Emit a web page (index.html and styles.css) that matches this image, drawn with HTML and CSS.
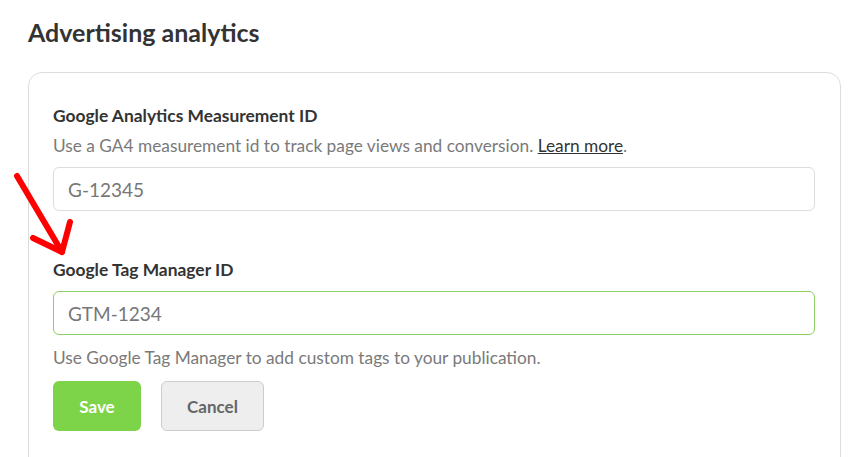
FILE: index.html
```html
<!DOCTYPE html>
<html lang="en">
<head>
    <meta charset="UTF-8">
    <meta name="viewport" content="width=device-width, initial-scale=1.0">
    <title>Advertising analytics</title>
    <link rel="stylesheet" href="styles.css">
</head>
<body>
    <div class="page">
        <h1>Advertising analytics</h1>
        <div class="card">
            <div class="field">
                <label for="ga-id">Google Analytics Measurement ID</label>
                <p class="help">Use a GA4 measurement id to track page views and conversion. <a href="#">Learn more</a>.</p>
                <input id="ga-id" type="text" placeholder="G-12345">
            </div>
            <div class="field">
                <label for="gtm-id">Google Tag Manager ID</label>
                <input id="gtm-id" class="active" type="text" placeholder="GTM-1234">
                <p class="help after">Use Google Tag Manager to add custom tags to your publication.</p>
            </div>
            <div class="actions">
                <button class="btn save">Save</button>
                <button class="btn cancel">Cancel</button>
            </div>
        </div>

        <svg class="arrow" width="80" height="100" viewBox="0 0 80 100">
            <path d="M5 4 L50 80" />
            <path d="M21 66 L50 80 L58 50" />
        </svg>
    </div>
</body>
</html>
```

FILE: styles.css
```css
* {
    margin: 0;
    padding: 0;
    box-sizing: border-box;
}

body {
    background: #fff;
    font-family: Lato, "Open Sans", Arial, sans-serif;
    color: #333;
}

.page {
    position: relative;
    padding: 12px 19px 0 28px;
}

h1 {
    font-size: 25px;
    font-weight: 700;
    color: #333;
    line-height: 40px;
    margin-bottom: 20px;
}

.card {
    border: 1px solid #ddd;
    border-radius: 14px;
    padding: 31px 25px 40px 24px;
}

.field {
    display: flex;
    flex-direction: column;
}

.field + .field {
    margin-top: 47px;
}

label {
    font-size: 17.4px;
    font-weight: 700;
    color: #333;
    line-height: 24px;
}

.help {
    font-size: 17.3px;
    color: #7a7a7a;
    line-height: 24px;
    margin: 6px 0 9px;
}

.help.after {
    margin: 11px 0 0;
}

.help a {
    color: #333;
}

input {
    height: 44px;
    border: 1px solid #ddd;
    border-radius: 6px;
    padding: 0 14px;
    font-family: inherit;
    font-size: 19px;
    color: #777;
    outline: none;
}

input::placeholder {
    color: #777;
}

input.active {
    margin-top: 9px;
    border-color: #8ccf62;
}

.actions {
    display: flex;
    gap: 20px;
    margin-top: 11px;
}

.btn {
    height: 50px;
    border-radius: 6px;
    font-family: inherit;
    font-size: 17px;
    cursor: pointer;
}

.save {
    width: 88px;
    background: #7ed448;
    border: none;
    color: #fff;
    font-weight: 700;
}

.cancel {
    width: 103px;
    background: #eee;
    border: 1px solid #ccc;
    color: #666;
    font-weight: 700;
}

.arrow {
    position: absolute;
    left: 12px;
    top: 172px;
    fill: none;
    stroke: #f00;
    stroke-width: 6;
    stroke-linecap: round;
    stroke-linejoin: round;
}
```
